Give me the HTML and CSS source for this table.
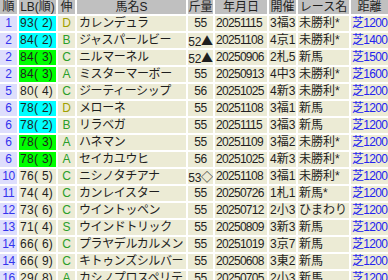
FILE: index.html
```html
<!DOCTYPE html>
<html lang="ja">
<head>
<meta charset="utf-8">
<link rel="stylesheet" href="styles.css">
</head>
<body>
<div class="tbl">
<div class="h">順</div><div class="h">LB(順)</div><div class="h">伸</div><div class="h">馬名S</div><div class="h">斤量</div><div class="h">年月日</div><div class="h">開催</div><div class="h">レース名</div><div class="h">距離</div>

<div class="c rank">1</div><div class="c lb cyan">93( 2)</div><div class="c grow d">D</div><div class="c name">カレンデュラ</div><div class="c wt">55</div><div class="c num">20251115</div><div class="c txt">3福3</div><div class="c txt">未勝利*</div><div class="c dist">芝1200</div>
<div class="c rank">2</div><div class="c lb cyan">84( 2)</div><div class="c grow">B</div><div class="c name">ジャスパールビー</div><div class="c wt">52<span class="mark">▲</span></div><div class="c num">20251108</div><div class="c txt">4京1</div><div class="c txt">未勝利*</div><div class="c dist">芝1400</div>
<div class="c rank">2</div><div class="c lb lime">84( 3)</div><div class="c grow">C</div><div class="c name">ニルマーネル</div><div class="c wt">52<span class="mark">▲</span></div><div class="c num">20250906</div><div class="c txt">2札5</div><div class="c txt">新馬</div><div class="c dist">芝1500</div>
<div class="c rank">2</div><div class="c lb lime">84( 3)</div><div class="c grow">A</div><div class="c name">ミスターマーボー</div><div class="c wt">55</div><div class="c num">20250913</div><div class="c txt">4中3</div><div class="c txt">未勝利*</div><div class="c dist">芝1600</div>
<div class="c rank">5</div><div class="c lb">80( 4)</div><div class="c grow">C</div><div class="c name">ジーティーシップ</div><div class="c wt">56</div><div class="c num">20251025</div><div class="c txt">4新3</div><div class="c txt">未勝利*</div><div class="c dist">芝1200</div>
<div class="c rank">6</div><div class="c lb cyan">78( 2)</div><div class="c grow d">D</div><div class="c name">メローネ</div><div class="c wt">55</div><div class="c num">20251108</div><div class="c txt">3福1</div><div class="c txt">新馬</div><div class="c dist">芝1200</div>
<div class="c rank">6</div><div class="c lb cyan">78( 2)</div><div class="c grow">B</div><div class="c name">リラベガ</div><div class="c wt">55</div><div class="c num">20251115</div><div class="c txt">3福3</div><div class="c txt">新馬</div><div class="c dist">芝1200</div>
<div class="c rank">6</div><div class="c lb lime">78( 3)</div><div class="c grow">A</div><div class="c name">ハネマン</div><div class="c wt">55</div><div class="c num">20251109</div><div class="c txt">3福2</div><div class="c txt">未勝利*</div><div class="c dist">芝1200</div>
<div class="c rank">6</div><div class="c lb lime">78( 3)</div><div class="c grow">A</div><div class="c name">セイカユウヒ</div><div class="c wt">56</div><div class="c num">20251025</div><div class="c txt">4新3</div><div class="c txt">未勝利*</div><div class="c dist">芝1200</div>
<div class="c rank">10</div><div class="c lb">76( 5)</div><div class="c grow">C</div><div class="c name">ニシノタチアナ</div><div class="c wt">53<span class="mark">◇</span></div><div class="c num">20251108</div><div class="c txt">3福1</div><div class="c txt">未勝利*</div><div class="c dist">芝1200</div>
<div class="c rank">11</div><div class="c lb">74( 4)</div><div class="c grow">C</div><div class="c name">カンレイスター</div><div class="c wt">55</div><div class="c num">20250726</div><div class="c txt">1札1</div><div class="c txt">新馬*</div><div class="c dist">芝1200</div>
<div class="c rank">12</div><div class="c lb">73( 6)</div><div class="c grow">C</div><div class="c name">ウイントッペン</div><div class="c wt">55</div><div class="c num">20250712</div><div class="c txt">2小3</div><div class="c txt">ひまわり</div><div class="c dist">芝1200</div>
<div class="c rank">13</div><div class="c lb">71( 4)</div><div class="c grow">S</div><div class="c name">ウインドトリック</div><div class="c wt">55</div><div class="c num">20250809</div><div class="c txt">3新3</div><div class="c txt">新馬</div><div class="c dist">芝1200</div>
<div class="c rank">14</div><div class="c lb">66( 6)</div><div class="c grow">C</div><div class="c name">プラヤデルカルメン</div><div class="c wt">55</div><div class="c num">20251019</div><div class="c txt">3京7</div><div class="c txt">新馬</div><div class="c dist">芝1200</div>
<div class="c rank">14</div><div class="c lb">66( 9)</div><div class="c grow">C</div><div class="c name">キトゥンズシルバー</div><div class="c wt">55</div><div class="c num">20250608</div><div class="c txt">3東2</div><div class="c txt">新馬</div><div class="c dist">芝1200</div>
<div class="c rank">16</div><div class="c lb">29( 8)</div><div class="c grow">A</div><div class="c name">カシノプロスペリテ</div><div class="c wt">55</div><div class="c num">20250705</div><div class="c txt">2小3</div><div class="c txt">新馬</div><div class="c dist">芝1200</div>
</div>
</body>
</html>
```
FILE: styles.css
```css
html, body {
  margin: 0;
  padding: 0;
  background: #ffffff;
  overflow: hidden;
  width: 388px;
  height: 280px;
}
.tbl {
  display: grid;
  grid-template-columns: 17px 37px 17px 109px 25px 52px 27px 51px 37px;
  grid-template-rows: 14px;
  grid-auto-rows: 15px;
  gap: 2px;
  font-family: "Liberation Sans", "Noto Sans CJK JP", sans-serif;
  font-size: 12px;
  color: #1e1e1e;
}
.h, .c {
  line-height: 15px;
  white-space: pre;
  overflow: hidden;
}
.h {
  background: #c0c0c0;
  text-align: center;
  line-height: 14px;
  color: #1e1e1e;
}
.c {
  background: #ecebd5;
  text-align: left;
}
.rank {
  background: #dedefc;
  color: #3333ee;
  text-align: center;
  letter-spacing: -0.3px;
}
.lb { padding-left: 1px; letter-spacing: 0.3px; }
.cyan { background: #00ffff; }
.lime { background: #00ff00; }
.grow { text-align: center; color: #2a9e2a; }
.grow.d { color: #a0a000; }
.name { padding-left: 2px; letter-spacing: -0.4px; }
.wt { text-align: center; letter-spacing: -0.3px; }
.mark { font-family: "Noto Sans CJK JP", sans-serif; }
.num { padding-left: 1px; letter-spacing: -0.7px; }
.txt { padding-left: 1px; }
.dist { padding-left: 1px; color: #2222ee; letter-spacing: -0.7px; }
```
